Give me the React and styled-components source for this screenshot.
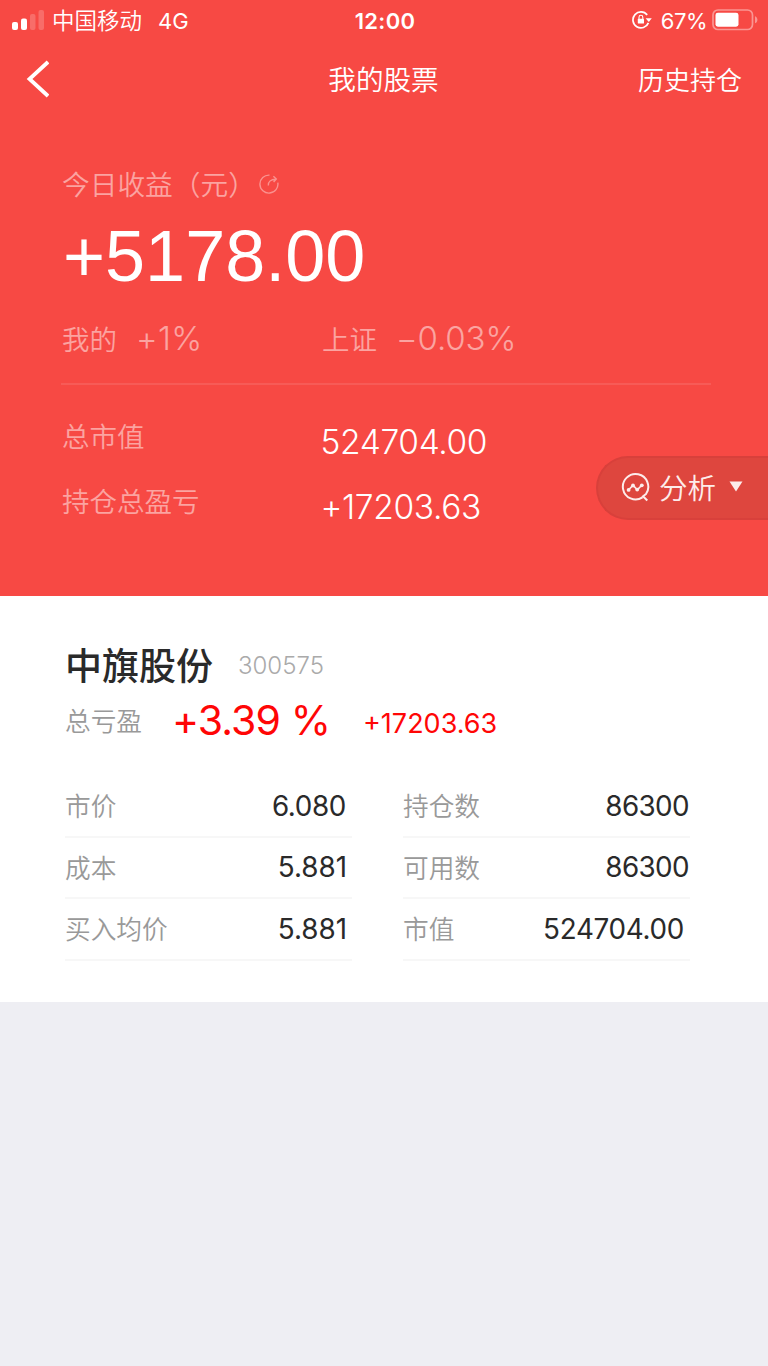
import styled, { createGlobalStyle } from "styled-components";

const positions = [
  { label: "市价", value: "6.080", space: "-0.35px", end: "6px" },
  { label: "持仓数", value: "86300", space: "-0.6px", end: "1px" },
  { label: "成本", value: "5.881", space: "0px", end: "5px" },
  { label: "可用数", value: "86300", space: "-0.6px", end: "1px" },
  { label: "买入均价", value: "5.881", space: "0px", end: "5px" },
  { label: "市值", value: "524704.00", space: "-0.3px", end: "6px" },
];

// 顶部状态栏
function StatusBar() {
  return (
    <StatusRow>
      <StatusSide>
        <svg width="32" height="20" viewBox="0 0 32 20" fill="#fff">
          <rect x="0" y="12" width="6" height="8" rx="2" />
          <rect x="9" y="8.5" width="6" height="11.5" rx="2" />
          <rect x="18" y="4" width="5.5" height="16" rx="2" opacity="0.2" />
          <rect x="26.5" y="0" width="5.5" height="20" rx="2" opacity="0.2" />
        </svg>
        <Carrier>中国移动</Carrier>
        <Network>4G</Network>
      </StatusSide>
      <Clock>12:00</Clock>
      <StatusSide $right>
        <svg width="20" height="20" viewBox="0 0 20 20" fill="none">
          <path
            d="M16.4 12.9A8 8 0 1 1 15.2 4.9"
            stroke="#fff"
            strokeWidth="1.7"
          />
          <path d="M13.6 8.2h6.2L16.8 12z" fill="#fff" />
          <rect x="5.8" y="8.8" width="6.2" height="4.8" rx="0.6" fill="#fff" />
          <path
            d="M7 9V7.2a1.9 1.9 0 0 1 3.8 0V9"
            stroke="#fff"
            strokeWidth="1.1"
          />
        </svg>
        <Percent>67%</Percent>
        <svg width="46" height="22" viewBox="0 0 46 22" fill="none">
          <rect
            x="1"
            y="1"
            width="39.5"
            height="19.5"
            rx="5"
            stroke="#fff"
            strokeOpacity="0.42"
            strokeWidth="1.7"
          />
          <rect x="3.5" y="3.7" width="23" height="14" rx="2.4" fill="#fff" />
          <path d="M43 7.2c3.2 1 3.2 6 0 7z" fill="#fff" fillOpacity="0.42" />
        </svg>
      </StatusSide>
    </StatusRow>
  );
}

function App() {
  return (
    <Page>
      <GlobalStyle />
      <Header>
        <StatusBar />
        <NavBar>
          <BackButton aria-label="返回">
            <svg width="24" height="38" viewBox="0 0 24 38" fill="none">
              <path d="M23 2L4.5 19L23 36" stroke="#fff" strokeWidth="3.8" />
            </svg>
          </BackButton>
          <NavTitle>我的股票</NavTitle>
          <HistoryLink>历史持仓</HistoryLink>
        </NavBar>

        <Summary>
          <TodayLabel>
            <span>今日收益（元）</span>
            <svg width="20" height="20" viewBox="0 0 20 20" fill="none">
              <path
                d="M10.5 1.1A9 9 0 1 0 18.8 8.6M9.3 11.5C9.3 7.4 11 5.5 17 5.2M14.4 2.3L17.3 5.1L14.6 8"
                stroke="#fff"
                strokeOpacity="0.4"
                strokeWidth="1.4"
              />
            </svg>
          </TodayLabel>
          <TodayProfit>+5178.00</TodayProfit>
          <CompareRow>
            <Compare>
              <span>我的</span>
              <CompareValue $space="0.4px">+1%</CompareValue>
            </Compare>
            <Compare>
              <span>上证</span>
              <CompareValue $space="-0.1px">−0.03%</CompareValue>
            </Compare>
          </CompareRow>
          <Divider />
          <TotalRow>
            <TotalLabel>总市值</TotalLabel>
            <TotalValue>524704.00</TotalValue>
          </TotalRow>
          <TotalRow>
            <TotalLabel>持仓总盈亏</TotalLabel>
            <TotalValue>+17203.63</TotalValue>
          </TotalRow>
        </Summary>

        <AnalyzeButton>
          <svg width="30" height="30" viewBox="0 0 30 30" fill="none">
            <path
              d="M21.5 24.4A12.7 12.7 0 1 1 25 21L22 23.3L26.3 27.5"
              stroke="#fdeceb"
              strokeWidth="2"
            />
            <path
              d="M7.5 17L12 12.2L16.3 16.8L21 12"
              stroke="#fdeceb"
              strokeWidth="1.7"
            />
            <g fill="#fdeceb">
              <circle cx="7.6" cy="16.9" r="1.9" />
              <circle cx="12" cy="12.5" r="1.9" />
              <circle cx="16.2" cy="16.6" r="1.9" />
              <circle cx="20.8" cy="12.3" r="1.9" />
            </g>
          </svg>
          <span>分析</span>
          <svg width="14" height="14" viewBox="0 0 14 14">
            <path d="M0.5 0.5h13L7 10.5z" fill="#fdeceb" />
          </svg>
        </AnalyzeButton>
      </Header>

      <StockCard>
        <StockTitle>
          <StockName>中旗股份</StockName>
          <StockCode>300575</StockCode>
        </StockTitle>
        <ProfitRow>
          <ProfitLabel>总亏盈</ProfitLabel>
          <ProfitRate>+3.39 %</ProfitRate>
          <ProfitAmount>+17203.63</ProfitAmount>
        </ProfitRow>
        <PositionGrid>
          {positions.map((item) => (
            <PositionCell key={item.label}>
              <PositionLabel>{item.label}</PositionLabel>
              <PositionValue $space={item.space} $end={item.end}>
                {item.value}
              </PositionValue>
            </PositionCell>
          ))}
        </PositionGrid>
      </StockCard>
    </Page>
  );
}

export default App;

const GlobalStyle = createGlobalStyle`
  * {
    box-sizing: border-box;
  }
  body {
    margin: 0;
    background: #eeeef3;
    font-family: Inter, "Noto Sans CJK SC", sans-serif;
    font-weight: 350;
  }
  svg {
    display: block;
    flex: none;
  }
`;

const Page = styled.div`
  width: 768px;
  min-height: 1366px;
  background: #eeeef3;
  white-space: nowrap;
`;
const Header = styled.header`
  position: relative;
  height: 596px;
  background: #f74944;
  color: #fff;
`;
const StatusRow = styled.div`
  display: grid;
  grid-template-columns: 1fr auto 1fr;
  align-items: center;
  height: 40px;
  padding: 0 10px 2px 12px;
`;
const StatusSide = styled.div`
  display: flex;
  align-items: center;
  justify-content: ${({ $right }) => ($right ? "flex-end" : "flex-start")};
`;
const Carrier = styled.span`
  margin-left: 8px;
  padding-top: 2px;
  font-size: 22.5px;
  line-height: 38px;
`;
const Network = styled.span`
  margin-left: 16px;
  padding-top: 2px;
  font-size: 22px;
  font-weight: 400;
`;
const Clock = styled.span`
  padding-top: 2px;
  font-size: 22px;
  font-weight: 600;
  letter-spacing: 0.3px;
`;
const Percent = styled.span`
  margin: 0 5px 0 9px;
  padding-top: 2px;
  font-size: 22px;
  font-weight: 400;
  letter-spacing: -0.5px;
`;
const NavBar = styled.nav`
  display: grid;
  grid-template-columns: 1fr auto 1fr;
  align-items: center;
  height: 78px;
  padding: 0 26px 0 25px;
`;
const BackButton = styled.button`
  width: 24px;
  padding: 0;
  border: 0;
  background: none;
`;
const NavTitle = styled.h1`
  margin: 0;
  padding-bottom: 2px;
  font-size: 27.6px;
  font-weight: 350;
`;
const HistoryLink = styled.span`
  justify-self: end;
  padding-bottom: 2px;
  font-size: 26px;
`;
const Summary = styled.section`
  padding: 44px 57px 0 61px;
`;
const TodayLabel = styled.div`
  display: flex;
  align-items: center;
  gap: 3px;
  height: 44px;
  padding-left: 1px;
  font-size: 27.7px;
  color: rgba(255, 255, 255, 0.5);

  span {
    padding-bottom: 3px;
  }
`;
const TodayProfit = styled.div`
  height: 98px;
  padding-left: 2px;
  font-family: "Liberation Sans", Arial, sans-serif;
  font-size: 72px;
  font-weight: 400;
  line-height: 101px;
`;
const CompareRow = styled.div`
  display: grid;
  grid-template-columns: 260px 1fr;
  height: 79px;
  padding-top: 11px;
`;
const Compare = styled.div`
  display: flex;
  align-items: center;
  height: 48px;
  padding-left: 1px;
  font-size: 27.5px;
  color: rgba(255, 255, 255, 0.5);

  span {
    padding-bottom: 2px;
  }
`;
const CompareValue = styled.span`
  margin-left: 19px;
  font-size: 33px;
  letter-spacing: ${({ $space }) => $space};
`;
const Divider = styled.div`
  height: 2px;
  margin-bottom: 19px;
  background: rgba(255, 255, 255, 0.1);
`;
const TotalRow = styled.div`
  display: grid;
  grid-template-columns: 258.5px 1fr;
  align-items: center;
  height: 65px;
  padding-left: 1px;
`;
const TotalLabel = styled.span`
  padding-bottom: 3px;
  font-size: 27.5px;
  color: rgba(255, 255, 255, 0.5);
`;
const TotalValue = styled.span`
  padding-top: 10px;
  font-size: 33.5px;
  letter-spacing: -0.35px;
`;
const AnalyzeButton = styled.button`
  position: absolute;
  top: 456px;
  right: 0;
  display: flex;
  align-items: center;
  width: 172px;
  height: 64px;
  padding: 0 0 0 23px;
  border: 2px solid #d8403b;
  border-right: 0;
  border-radius: 32px 0 0 32px;
  background: #de463e;
  color: #fdeceb;
  font-family: inherit;
  font-size: 28.5px;
  font-weight: 350;

  span {
    margin: 0 13px 0 8px;
    padding-bottom: 4px;
  }
`;
const StockCard = styled.section`
  height: 406px;
  padding: 42px 78px 0 65px;
  background: #fff;
`;
const StockTitle = styled.div`
  display: flex;
  align-items: center;
  height: 54px;
`;
const StockName = styled.h2`
  margin: 0 25px 0 0;
  padding-top: 3px;
  font-size: 37px;
  line-height: 54px;
  font-weight: 500;
  color: #2a2a2a;
`;
const StockCode = styled.span`
  font-size: 24px;
  font-weight: 300;
  color: #aaa;
`;
const ProfitRow = styled.div`
  display: flex;
  align-items: center;
  height: 58px;
`;
const ProfitLabel = styled.span`
  width: 107px;
  padding-bottom: 4px;
  font-size: 25.7px;
  color: #999;
`;
const ProfitRate = styled.span`
  width: 191px;
  padding-bottom: 3px;
  font-size: 41px;
  font-weight: 400;
  letter-spacing: -0.9px;
  color: #ff0606;
`;
const ProfitAmount = styled.span`
  padding-top: 4px;
  font-size: 27px;
  font-weight: 400;
  color: #ff0606;
`;
const PositionGrid = styled.div`
  display: grid;
  grid-template-columns: 1fr 1fr;
  grid-auto-rows: 61.5px;
  column-gap: 51px;
  margin-top: 26px;
`;
const PositionCell = styled.div`
  display: flex;
  align-items: center;
  justify-content: space-between;
  border-bottom: 2px solid #f7f7f7;
`;
const PositionLabel = styled.span`
  padding-bottom: 2px;
  font-size: 25.7px;
  color: #999;
`;
const PositionValue = styled.span`
  padding-right: ${({ $end }) => $end};
  font-size: 27.8px;
  font-weight: 400;
  letter-spacing: ${({ $space }) => $space};
  color: #2a2a2a;
`;
